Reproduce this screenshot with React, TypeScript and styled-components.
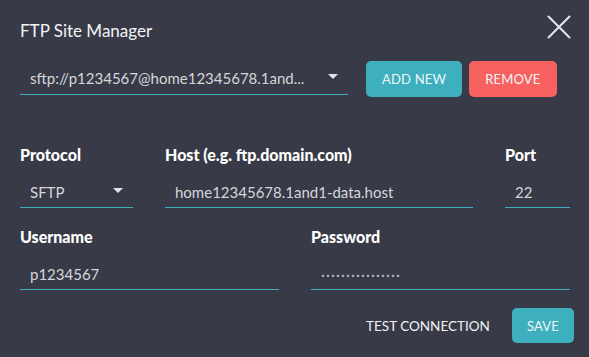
import React from 'react'
import styled, { createGlobalStyle } from 'styled-components'

const bg = '#383b47'
const teal = '#3eafbe'
const coral = '#f7615f'
const fieldText = '#d5d6db'

const GlobalStyle = createGlobalStyle`
  html, body {
    margin: 0;
    padding: 0;
    background: ${bg};
  }
  body {
    font-family: Lato, 'Open Sans', sans-serif;
    -webkit-font-smoothing: antialiased;
  }
`

const Dialog = styled.div`
  box-sizing: border-box;
  width: 589px;
  height: 357px;
  background: ${bg};
  padding: 16px 15px 0 20px;
  display: flex;
  flex-direction: column;
`

const Header = styled.header`
  display: flex;
  justify-content: space-between;
  align-items: flex-start;
  padding-right: 3px;
`

const Title = styled.h2`
  margin: 5px 0 0;
  font-size: 17px;
  line-height: 20px;
  font-weight: 400;
  color: #f3f3f5;
`

const CloseButton = styled.button`
  width: 24px;
  height: 24px;
  margin-top: -1px;
  padding: 0;
  border: none;
  background: transparent;
  cursor: pointer;
  display: flex;
  align-items: center;
  justify-content: center;
`

const SiteRow = styled.div`
  display: flex;
  align-items: flex-start;
  margin-top: 20px;
`

const SelectBox = styled.div<{ $width: number; $height: number }>`
  box-sizing: border-box;
  width: ${(p) => p.$width}px;
  height: ${(p) => p.$height}px;
  padding: 0 10px;
  border-bottom: 1px solid ${teal};
  display: flex;
  align-items: center;
  gap: 8px;
  color: ${fieldText};
  font-size: 15px;
  cursor: pointer;
`

const SelectValue = styled.span`
  flex: 1;
  min-width: 0;
  white-space: nowrap;
  overflow: hidden;
`

const Caret = styled.span`
  width: 0;
  height: 0;
  border-left: 5px solid transparent;
  border-right: 5px solid transparent;
  border-top: 5px solid #e4e5e8;
  margin-top: -3px;
`

const Button = styled.button<{ $color: string; $height?: number }>`
  height: ${(p) => p.$height ?? 36}px;
  padding: 0 16px;
  border: none;
  border-radius: 5px;
  background: ${(p) => p.$color};
  color: #eef6f7;
  font-family: inherit;
  font-size: 13px;
  letter-spacing: 0.2px;
  cursor: pointer;
`

const SiteButtons = styled.div`
  display: flex;
  gap: 7px;
  margin-left: 18px;
`

const FieldGrid = styled.div<{ $cols: string }>`
  width: 550px;
  display: grid;
  grid-template-columns: ${(p) => p.$cols};
  column-gap: 32px;
`

const Fields = styled.div`
  margin-top: 49px;
  display: flex;
  flex-direction: column;
  gap: 20px;
`

const Field = styled.label`
  display: flex;
  flex-direction: column;
  gap: 13px;
`

const Label = styled.span`
  font-size: 16px;
  line-height: 18px;
  font-weight: 900;
  color: #ffffff;
`

const Input = styled.input`
  box-sizing: border-box;
  width: 100%;
  height: 31px;
  padding: 0 10px;
  border: none;
  border-bottom: 1px solid ${teal};
  background: transparent;
  color: ${fieldText};
  font-family: inherit;
  font-size: 15px;
  outline: none;
`

const Dots = styled(Input)`
  letter-spacing: 1.1px;
  color: #b9bbc2;
`

const Footer = styled.footer`
  margin-top: 18px;
  display: flex;
  justify-content: flex-end;
  align-items: center;
  gap: 22px;
`

const TextButton = styled.button`
  padding: 0;
  border: none;
  background: transparent;
  color: #f1f2f4;
  font-family: inherit;
  font-size: 13.5px;
  cursor: pointer;
`

const SaveButton = styled(Button)`
  padding: 0 15px;
`

const CloseIcon = () => (
  <svg width="24" height="24" viewBox="0 0 24 24" fill="none">
    <path d="M1.5 1.5 L22.5 22.5 M22.5 1.5 L1.5 22.5" stroke="#e6e7ea" strokeWidth="2" strokeLinecap="round" />
  </svg>
)

const App: React.FC = () => (
  <>
    <GlobalStyle />
    <Dialog>
      <Header>
        <Title>FTP Site Manager</Title>
        <CloseButton aria-label="Close">
          <CloseIcon />
        </CloseButton>
      </Header>

      <SiteRow>
        <SelectBox $width={328} $height={34}>
          <SelectValue>sftp://p1234567@home12345678.1and...</SelectValue>
          <Caret />
        </SelectBox>
        <SiteButtons>
          <Button $color={teal}>ADD NEW</Button>
          <Button $color={coral}>REMOVE</Button>
        </SiteButtons>
      </SiteRow>

      <Fields>
        <FieldGrid $cols="113px 1fr 65px">
          <Field as="div">
            <Label>Protocol</Label>
            <SelectBox $width={113} $height={31}>
              <SelectValue>SFTP</SelectValue>
              <Caret />
            </SelectBox>
          </Field>
          <Field>
            <Label>Host (e.g. ftp.domain.com)</Label>
            <Input readOnly value="home12345678.1and1-data.host" />
          </Field>
          <Field>
            <Label>Port</Label>
            <Input readOnly value="22" />
          </Field>
        </FieldGrid>
        <FieldGrid $cols="1fr 1fr">
          <Field>
            <Label>Username</Label>
            <Input readOnly value="p1234567" />
          </Field>
          <Field>
            <Label>Password</Label>
            <Dots readOnly value="················" />
          </Field>
        </FieldGrid>
      </Fields>

      <Footer>
        <TextButton>TEST CONNECTION</TextButton>
        <SaveButton $color={teal} $height={35}>SAVE</SaveButton>
      </Footer>
    </Dialog>
  </>
)

export default App
